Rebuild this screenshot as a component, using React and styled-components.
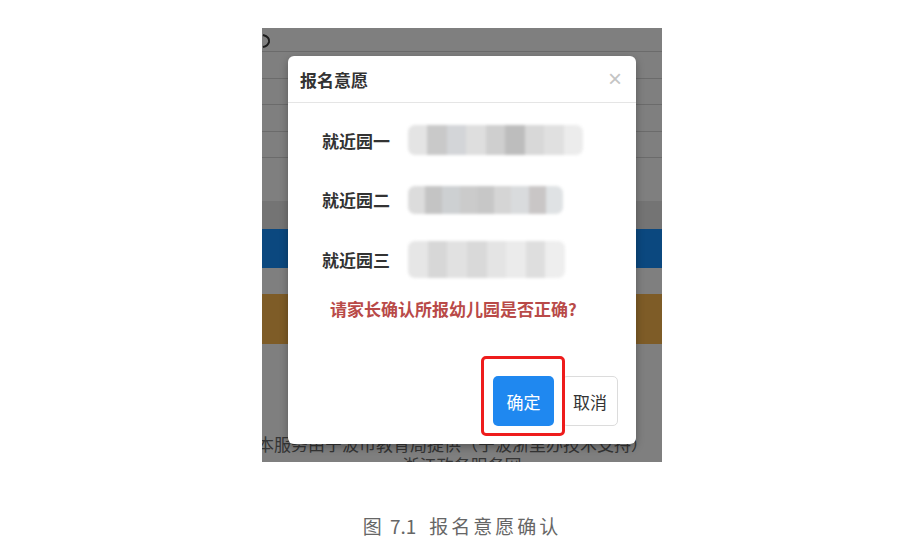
import React from "react";
import styled, { createGlobalStyle } from "styled-components";

const GlobalStyle = createGlobalStyle`
  html, body {
    margin: 0;
    padding: 0;
    background: #ffffff;
  }
  body {
    font-family: "Noto Sans CJK SC", "Noto Sans", sans-serif;
  }
`;

const schools = [
  {
    label: "就近园一",
    width: 175,
    height: 30,
    cells: ["#e4e4e4", "#c9c9c9", "#d3d5d8", "#dedede", "#cfcfcf", "#bdbdbd", "#d8d8d8", "#e0e0e0", "#ececec"],
  },
  {
    label: "就近园二",
    width: 155,
    height: 28,
    cells: ["#dcdcdc", "#c4c4c4", "#cdd0d2", "#cbcbcb", "#c7c7c7", "#d5d5d5", "#d9dbdd", "#c9c6c6", "#dfe2e4"],
  },
  {
    label: "就近园三",
    width: 157,
    height: 37,
    cells: ["#e6e6e6", "#d7d7d7", "#e1e1e1", "#d9d9d9", "#e4e4e4", "#ebebeb", "#dedede", "#eeeeee"],
  },
];

function App() {
  return (
    <>
      <GlobalStyle />
      <Page>
        <Figure>
          <Shot>
            <BackPage>
              <TopRow>
                <svg width="10" height="16" viewBox="0 0 10 16">
                  <path d="M1 2 Q8 4 7 9 Q6 13 1 14" fill="none" stroke="#3a3a3a" strokeWidth="2" />
                </svg>
              </TopRow>
              <ListRow />
              <ListRow />
              <ListRow />
              <ListRow />
              <Spacer $h={43} />
              <Band $color="#e8e8e8" $h={28} />
              <Band $color="#1690ff" $h={39} />
              <Spacer $h={26} />
              <Band $color="#fdb84e" $h={50} />
              <Spacer $h={88} />
              <FooterText>本服务由宁波市教育局提供（宁波浙里办技术支持）</FooterText>
              <FooterText $center>浙江政务服务网</FooterText>
            </BackPage>
            <Overlay>
              <Modal>
                <ModalHeader>
                  <Title>报名意愿</Title>
                  <Close>×</Close>
                </ModalHeader>
                <ModalBody>
                  {schools.map((s) => (
                    <SchoolRow key={s.label}>
                      <Label>{s.label}</Label>
                      <Mosaic style={{ width: s.width, height: s.height }}>
                        {s.cells.map((c, i) => (
                          <Cell key={i} $color={c} />
                        ))}
                      </Mosaic>
                    </SchoolRow>
                  ))}
                  <Warning>请家长确认所报幼儿园是否正确?</Warning>
                </ModalBody>
                <ModalFooter>
                  <Highlight>
                    <PrimaryButton>确定</PrimaryButton>
                  </Highlight>
                  <DefaultButton>取消</DefaultButton>
                </ModalFooter>
              </Modal>
            </Overlay>
          </Shot>
          <Caption>
            <CaptionNum>图 7.1</CaptionNum>
            <CaptionText>报名意愿确认</CaptionText>
          </Caption>
        </Figure>
      </Page>
    </>
  );
}

export default App;

const Page = styled.div`
  width: 899px;
  height: 550px;
  box-sizing: border-box;
  padding-left: 25px;
  padding-top: 28px;
  display: flex;
  justify-content: center;
`;

const Figure = styled.div`
  display: flex;
  flex-direction: column;
  align-items: center;
`;

const Shot = styled.div`
  position: relative;
  width: 400px;
  height: 434px;
  overflow: hidden;
  background: #ffffff;
`;

const BackPage = styled.div`
  display: flex;
  flex-direction: column;
`;

const TopRow = styled.div`
  height: 24px;
  box-sizing: border-box;
  border-bottom: 1px solid #d6d6d6;
  padding: 2px 0 0 0;
`;

const ListRow = styled.div`
  height: 26.5px;
  box-sizing: border-box;
  border-bottom: 1px solid #d6d6d6;
`;

const Spacer = styled.div`
  height: ${(p) => p.$h}px;
`;

const Band = styled.div`
  height: ${(p) => p.$h}px;
  background: ${(p) => p.$color};
`;

const FooterText = styled.div`
  font-size: 17px;
  line-height: 21px;
  color: #6a6a6a;
  white-space: nowrap;
  margin-left: ${(p) => (p.$center ? "0" : "-5px")};
  margin-top: ${(p) => (p.$center ? "0" : "1px")};
  text-align: ${(p) => (p.$center ? "center" : "left")};
`;

const Overlay = styled.div`
  position: absolute;
  inset: 0;
  background: rgba(0, 0, 0, 0.5);
  display: flex;
  justify-content: center;
  align-items: flex-start;
`;

const Modal = styled.div`
  margin-top: 28px;
  width: 348px;
  height: 388px;
  background: #ffffff;
  border-radius: 6px;
  box-shadow: 0 3px 9px rgba(0, 0, 0, 0.3);
  display: flex;
  flex-direction: column;
`;

const ModalHeader = styled.div`
  height: 47px;
  box-sizing: border-box;
  border-bottom: 1px solid #e5e5e5;
  padding: 0 14px 0 12px;
  display: flex;
  align-items: center;
  justify-content: space-between;
`;

const Title = styled.div`
  font-size: 17px;
  font-weight: 700;
  color: #333333;
`;

const Close = styled.div`
  font-family: "Liberation Sans", Arial, sans-serif;
  font-size: 24px;
  color: #c4c4c4;
  line-height: 1;
`;

const ModalBody = styled.div`
  flex: 1;
  padding: 17px 0 0 34px;
  display: flex;
  flex-direction: column;
  gap: 19.5px;
`;

const SchoolRow = styled.div`
  height: 40px;
  display: flex;
  align-items: center;
  gap: 18px;
`;

const Label = styled.div`
  font-size: 17px;
  font-weight: 700;
  color: #333333;
  white-space: nowrap;
`;

const Mosaic = styled.div`
  display: flex;
  border-radius: 7px;
  overflow: hidden;
  filter: blur(1.5px);
`;

const Cell = styled.div`
  flex: 1;
  background: ${(p) => p.$color};
`;

const Warning = styled.div`
  margin: -3px 0 0 8px;
  font-size: 17px;
  font-weight: 700;
  color: #b94a48;
  white-space: nowrap;
`;

const ModalFooter = styled.div`
  padding: 0 18px 18px 0;
  display: flex;
  justify-content: flex-end;
  align-items: center;
  gap: 8px;
`;

const Highlight = styled.span`
  position: relative;
  display: flex;

  &::after {
    content: "";
    position: absolute;
    top: -20px;
    bottom: -10px;
    left: -12px;
    right: -11px;
    border: 3px solid #ee1c1c;
    border-radius: 5px;
    pointer-events: none;
  }
`;

const PrimaryButton = styled.button`
  width: 61px;
  height: 50px;
  border: none;
  border-radius: 5px;
  background: #1f88f0;
  color: #ffffff;
  font-family: "Noto Sans CJK SC", sans-serif;
  font-size: 17px;
  padding: 0;
`;

const DefaultButton = styled.button`
  width: 56px;
  height: 50px;
  border: 1px solid #dcdcdc;
  border-radius: 5px;
  background: #ffffff;
  color: #333333;
  font-family: "Noto Sans CJK SC", sans-serif;
  font-size: 17px;
  padding: 0;
`;

const Caption = styled.div`
  margin-top: 50px;
  display: flex;
  align-items: baseline;
  gap: 13px;
  font-size: 19px;
  color: #666666;
  white-space: nowrap;
`;

const CaptionNum = styled.span`
  word-spacing: 4px;
`;

const CaptionText = styled.span`
  letter-spacing: 3px;
`;
